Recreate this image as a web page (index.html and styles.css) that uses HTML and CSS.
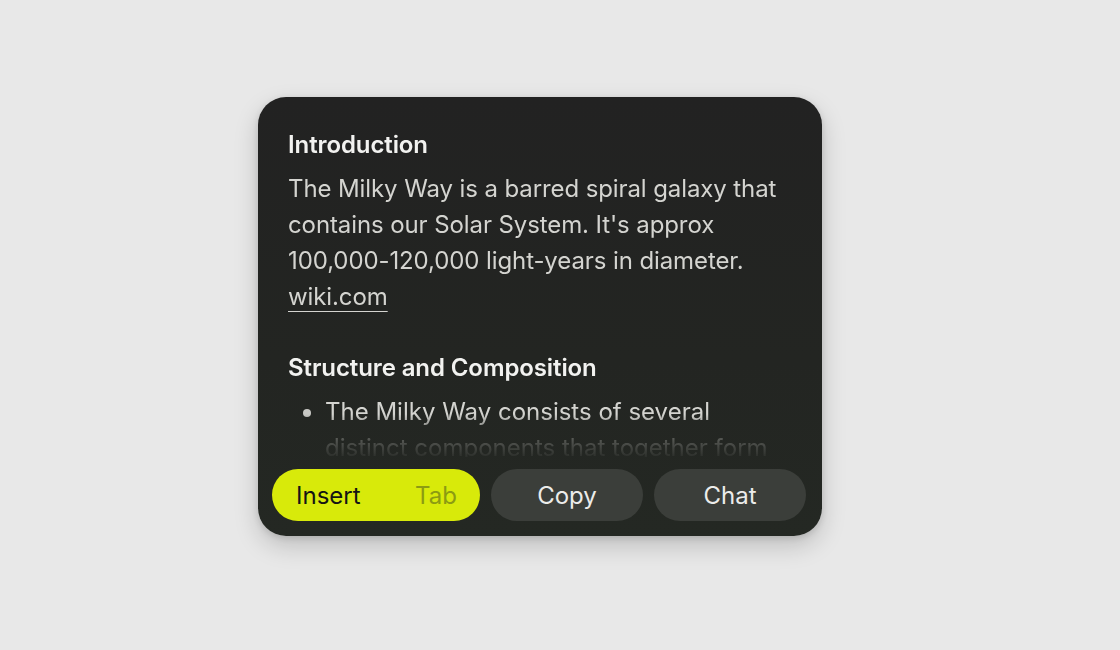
FILE: index.html
```html
<!DOCTYPE html>
<html>
<head>
<meta charset="utf-8">
<link rel="stylesheet" href="styles.css">
</head>
<body>
<div class="stage">
  <div class="card">
    <div class="content">
      <h2 class="heading">Introduction</h2>
      <p class="para">The Milky Way is a barred spiral galaxy that contains our Solar System. It's approx 100,000-120,000 light-years in diameter. <a class="link" href="#">wiki.com</a></p>
      <h2 class="heading">Structure and Composition</h2>
      <ul class="list">
        <li>The Milky Way consists of several distinct components that together form</li>
      </ul>
    </div>
    <div class="actions">
      <button class="btn btn-primary"><span>Insert</span><span class="kbd">Tab</span></button>
      <button class="btn btn-secondary">Copy</button>
      <button class="btn btn-secondary">Chat</button>
    </div>
  </div>
</div>
</body>
</html>
```

FILE: styles.css
```css
html, body {
  margin: 0;
  padding: 0;
  background: #e8e8e8;
  font-family: Inter, "Noto Sans", sans-serif;
}
.stage {
  width: 1120px;
  height: 650px;
  display: flex;
  align-items: flex-start;
  justify-content: flex-start;
  padding: 97px 0 0 258px;
  box-sizing: border-box;
}
.card {
  width: 564px;
  height: 439px;
  box-sizing: border-box;
  border-radius: 28px;
  background: linear-gradient(180deg, #222222 0%, #232522 60%, #242823 100%);
  box-shadow: 0 10px 24px rgba(0,0,0,0.18), 0 2px 6px rgba(0,0,0,0.12);
  display: flex;
  flex-direction: column;
  padding: 30px 15px 15px 14px;
  overflow: hidden;
}
.content {
  height: 330px;
  overflow: hidden;
  padding: 0 15px 0 16px;
  -webkit-mask-image: linear-gradient(180deg, #000 0%, #000 87%, rgba(0,0,0,0.35) 93%, rgba(0,0,0,0.05) 100%);
  mask-image: linear-gradient(180deg, #000 0%, #000 87%, rgba(0,0,0,0.35) 93%, rgba(0,0,0,0.05) 100%);
}
.heading {
  margin: 0 0 8px 0;
  font-size: 24px;
  line-height: 36px;
  font-weight: 600;
  color: #f2f2f0;
  letter-spacing: -0.1px;
}
.para {
  margin: 0 0 35px 0;
  font-size: 24px;
  line-height: 36px;
  font-weight: 400;
  color: #d4d4d0;
  letter-spacing: -0.1px;
}
.link {
  color: #d4d4d0;
  text-decoration: underline;
  text-underline-offset: 6px;
  text-decoration-thickness: 1px;
}
.list {
  margin: 0;
  padding-left: 37px;
  font-size: 24px;
  line-height: 36px;
  color: #d4d4d0;
  letter-spacing: 0;
}
.list li::marker {
  color: #c8c8c4;
}
.actions {
  display: flex;
  gap: 11px;
  margin-top: 12px;
}
.btn {
  height: 52px;
  border: none;
  border-radius: 26px;
  font-family: Inter, "Noto Sans", sans-serif;
  font-size: 24px;
  font-weight: 400;
  display: flex;
  align-items: center;
  justify-content: center;
  padding: 0;
  cursor: pointer;
}
.btn-primary {
  width: 208px;
  background: #d8ea0a;
  color: #141414;
  justify-content: space-between;
  padding: 0 23px 0 24px;
}
.kbd {
  color: #8c9b12;
}
.btn-secondary {
  width: 152px;
  background: #3b3e3a;
  color: #ececea;
}
```
